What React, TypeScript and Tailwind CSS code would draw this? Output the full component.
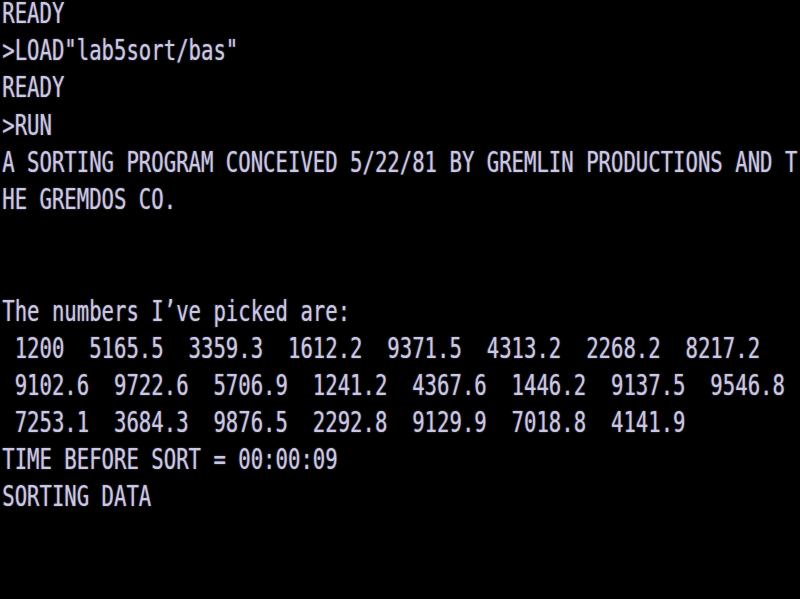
const lines = [
  'READY',
  '>LOAD"lab5sort/bas"',
  'READY',
  '>RUN',
  'A SORTING PROGRAM CONCEIVED 5/22/81 BY GREMLIN PRODUCTIONS AND T',
  'HE GREMDOS CO.',
  '',
  '',
  'The numbers I’ve picked are:',
  ' 1200  5165.5  3359.3  1612.2  9371.5  4313.2  2268.2  8217.2',
  ' 9102.6  9722.6  5706.9  1241.2  4367.6  1446.2  9137.5  9546.8',
  ' 7253.1  3684.3  9876.5  2292.8  9129.9  7018.8  4141.9',
  'TIME BEFORE SORT = 00:00:09',
  'SORTING DATA',
];

export default function App() {
  return (
    <div className="w-[800px] h-[599px] bg-black overflow-hidden">
      {/* screen text, 64 columns */}
      <div className="pl-[3px] origin-top-left scale-x-[0.737] w-[1100px] font-['DejaVu_Sans_Mono',monospace] text-[28px] leading-[27px] text-[#cbc7e6] [text-shadow:0_0_2px_rgba(203,199,230,0.55)]">
        {lines.map((line, i) => (
          <div key={i} className="h-[37.2px] whitespace-pre">
            {line}
          </div>
        ))}
      </div>
    </div>
  );
}
